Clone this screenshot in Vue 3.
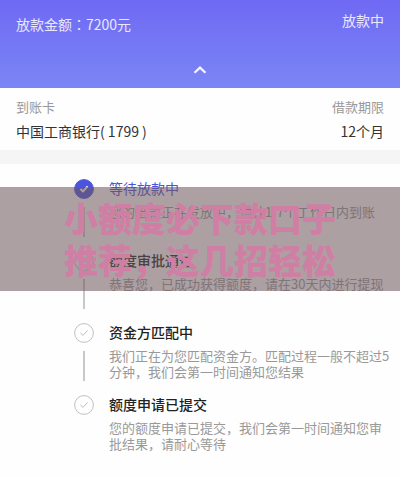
<template>
    <main class="page">
        <header class="summary">
            <div class="summary-row">
                <span class="amount">放款金额：7200元</span>
                <span class="status">放款中</span>
            </div>
            <button class="toggle" type="button" aria-label="收起">
                <svg width="14" height="8" viewBox="0 0 14 8">
                    <path d="M1.5 6.8 L7 1.6 L12.5 6.8" fill="none" stroke="#f4f4ff" stroke-width="2.2" />
                </svg>
            </button>
        </header>

        <dl class="account">
            <div v-for="item in account" :key="item.label">
                <dt>{{ item.label }}</dt>
                <dd>{{ item.value }}</dd>
            </div>
        </dl>

        <ol class="steps">
            <li v-for="step in steps" :key="step.title" :class="{ active: step.active }">
                <div class="marker">
                    <svg class="check" width="20" height="20" viewBox="0 0 20 20">
                        <circle cx="10" cy="10" r="9.4" />
                        <path d="M6.4 10 L9 12.4 L13.6 7.4" />
                    </svg>
                    <i v-if="!step.last" class="line"></i>
                </div>
                <div class="content">
                    <h2>{{ step.title }}</h2>
                    <p>{{ step.text }}</p>
                </div>
            </li>
        </ol>

        <div class="banner">
            <p>小额度必下款口子<br />推荐，这几招轻松</p>
        </div>
    </main>
</template>

<script setup>
    const account = [
        { label: '到账卡', value: '中国工商银行( 1799 )' },
        { label: '借款期限', value: '12个月' }
    ];

    const steps = [
        { title: '等待放款中', text: '您的借款正在发放中，预计1-7个工作日内到账', active: true },
        { title: '额度审批通过', text: '恭喜您，已成功获得额度，请在30天内进行提现' },
        { title: '资金方匹配中', text: '我们正在为您匹配资金方。匹配过程一般不超过5分钟，我们会第一时间通知您结果' },
        { title: '额度申请已提交', text: '您的额度申请已提交，我们会第一时间通知您审批结果，请耐心等待', last: true }
    ];
</script>

<style>
    body {
        margin: 0;
        background: #fefefe;
    }
</style>

<style scoped>
    .page {
        position: relative;
        font-family: "Noto Sans CJK SC", sans-serif;
        font-size: 13px;
        color: #333;
    }
    .summary {
        display: flex;
        flex-direction: column;
        height: 88px;
        background: linear-gradient(#6f69f3, #7a86f5);
    }
    .summary-row {
        display: flex;
        justify-content: space-between;
        padding: 10px 16px 0;
        font-size: 14px;
        line-height: 20px;
        color: #e8e8ff;
    }
    .amount {
        padding-top: 4px;
        font-family: "Noto Sans CJK TC", "Noto Sans CJK SC", sans-serif;
    }
    .toggle {
        display: flex;
        align-self: center;
        margin-top: 24px;
        padding: 8px;
        border: none;
        background: none;
        cursor: pointer;
    }
    .account {
        display: flex;
        justify-content: space-between;
        margin: 0;
        padding: 6px 16px;
        border-bottom: 14px solid #f5f5f5;
        line-height: 25px;
    }
    .account div:last-child {
        text-align: right;
    }
    .account dt {
        color: #999;
    }
    .account dd {
        margin: 0;
        font-size: 14px;
    }
    .steps {
        margin: 0;
        padding: 15px 8px 0 74px;
        list-style: none;
    }
    .steps li {
        display: flex;
        gap: 15px;
        min-height: 72px;
    }
    .marker {
        display: flex;
        flex-direction: column;
        align-items: center;
        gap: 8px;
    }
    .check {
        fill: none;
        stroke: #c0c0c0;
    }
    .active .check circle {
        fill: #4a54dc;
        stroke: #4a54dc;
    }
    .active .check path {
        stroke: #fff;
        stroke-width: 2;
    }
    .line {
        width: 2px;
        height: 30px;
        background: #c8c8c8;
    }
    .content {
        flex: 1;
    }
    h2 {
        margin: 0 0 7px;
        font-size: 14px;
        font-weight: 500;
        line-height: 18px;
        color: #222;
    }
    .active h2 {
        font-weight: 400;
        color: #4a54dc;
    }
    .content p {
        margin: 0;
        line-height: 16px;
        color: #999;
    }
    /* translucent strip lying over the first two steps */
    .banner {
        position: absolute;
        top: 187px;
        left: 0;
        right: 0;
        padding: 10px 0;
        background: rgba(109, 88, 94, 0.57);
        text-align: center;
    }
    .banner p {
        margin: 0;
        font-size: 34px;
        font-weight: 900;
        line-height: 42px;
        color: #d07fa4;
    }
</style>
